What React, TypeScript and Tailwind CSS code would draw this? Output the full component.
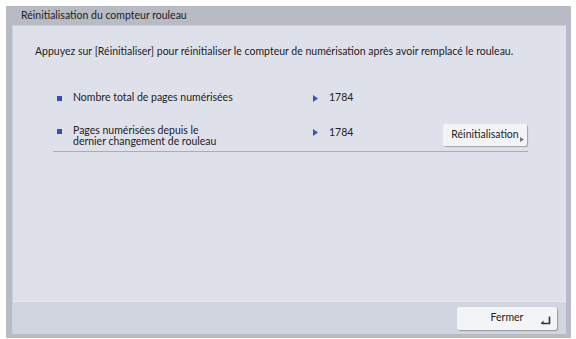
const font = { fontFamily: 'Lato, "Noto Sans", sans-serif' };

function Bullet({ className = "" }: { className?: string }) {
  return <span className={`h-[5px] w-[5px] shrink-0 bg-[#2f4fc8] ${className}`} />;
}

function Arrow({ className = "" }: { className?: string }) {
  return (
    <svg width="5" height="7" viewBox="0 0 5 7" className={`shrink-0 ${className}`}>
      <path d="M0 0 L5 3.5 L0 7 Z" fill="#3b55b8" />
    </svg>
  );
}

function ReturnIcon() {
  return (
    <svg width="11" height="9" viewBox="0 0 11 9" className="absolute bottom-[5px] right-[6px]">
      <path d="M9.5 0.5 V7.5 H3" stroke="#333" strokeWidth="1.6" fill="none" />
      <path d="M0.5 7.5 L3.5 4.5 L3.5 8.5 Z" fill="#333" />
    </svg>
  );
}

export default function App() {
  return (
    <div className="h-[339px] w-[576px] bg-white pb-[1px] pl-[6px] pr-[5px] pt-[6px] text-[#222]" style={font}>
      <div className="flex h-full flex-col bg-[#b8bbc4] pb-[4px] pr-[5px]">
        <div className="flex h-[19px] items-center pl-[15px] text-[10.5px] text-[#222]">
          Réinitialisation du compteur rouleau
        </div>
        <div className="ml-[6px] flex flex-1 flex-col border-l border-t border-[#cdd0da] bg-[#dfe1ea]">
          <div className="flex-1">
            <p className="mt-[18px] whitespace-nowrap pl-[22px] text-[10.5px] leading-[15px]">
              Appuyez sur [Réinitialiser] pour réinitialiser le compteur de numérisation après avoir remplacé le rouleau.
            </p>
            <div className="ml-[40px] mr-[38px] mt-[29px] border-b border-[#a9adb8] pb-[4px] pl-[4px] text-[10.5px]">
              <div className="flex h-[20px] items-center">
                <div className="flex w-[256px] items-center gap-[11px]">
                  <Bullet />
                  <span>Nombre total de pages numérisées</span>
                </div>
                <div className="flex items-center gap-[11px]">
                  <Arrow />
                  <span>1784</span>
                </div>
              </div>
              <div className="mt-[16px] flex items-start">
                <div className="flex w-[256px] items-start gap-[11px] pt-[1px]">
                  <Bullet className="mt-[4px]" />
                  <span className="leading-[11px]">
                    Pages numérisées depuis le
                    <br />
                    dernier changement de rouleau
                  </span>
                </div>
                <div className="mt-[3px] flex w-[130px] items-center gap-[11px] leading-[11px]">
                  <Arrow />
                  <span>1784</span>
                </div>
                <button className="relative flex h-[22px] w-[84px] items-center justify-center rounded-[2px] bg-[#f3f4f6] text-[10.5px] shadow-[1px_1px_1px_rgba(0,0,0,0.28)]">
                  Réinitialisation
                  <svg width="4" height="5" viewBox="0 0 4 5" className="absolute bottom-[4px] right-[3px]">
                    <path d="M0 0 L4 2.5 L0 5 Z" fill="#777" />
                  </svg>
                </button>
              </div>
            </div>
          </div>
          <div className="flex h-[33px] items-center justify-end border-t border-[#e8eaf0] bg-[#d0d5df] pr-[9px]">
            <button className="relative flex h-[23px] w-[100px] items-center justify-center rounded-[2px] bg-[#f3f4f6] text-[10.5px] shadow-[1px_1px_1px_rgba(0,0,0,0.28)]">
              Fermer
              <ReturnIcon />
            </button>
          </div>
        </div>
      </div>
    </div>
  );
}
